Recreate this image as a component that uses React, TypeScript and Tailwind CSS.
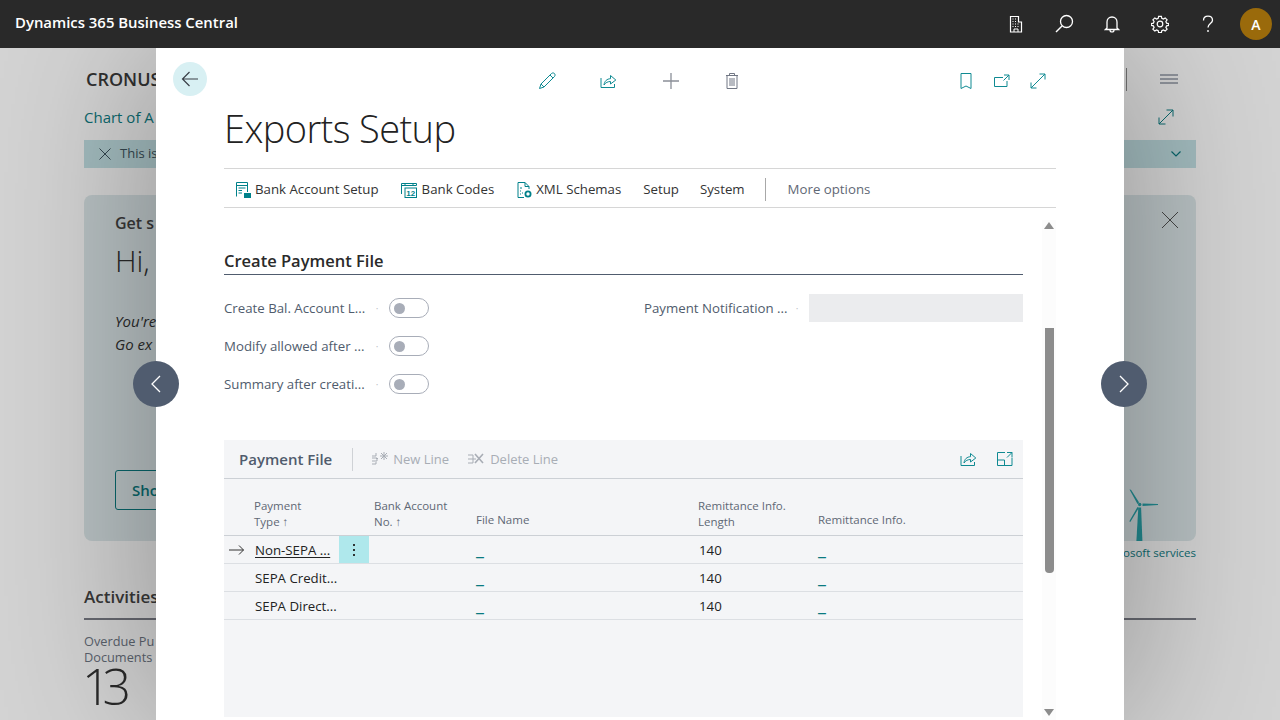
import React from "react";

const Sv = ({ w = 20, h = 20, c = "", children }: { w?: number; h?: number; c?: string; children: React.ReactNode }) => (
  <svg width={w} height={h} viewBox={`0 0 ${w} ${h}`} fill="none" stroke="currentColor" strokeWidth="1" className={c}>
    {children}
  </svg>
);

const Expand = ({ c = "" }: { c?: string }) => (
  <Sv w={18} h={18} c={c}>
    <path d="M2 16 16 2M9.5 2H16V8.5M2 9.5V16H8.5" strokeWidth="1" />
  </Sv>
);

const ShareIcon = ({ c = "" }: { c?: string }) => (
  <Sv w={18} h={18} c={c}>
    <path d="M2 6V15.5H15.500V12" />
    <path d="M5 13C5.5 9 8 6.8 11.5 6.7V3.500L16.8 8 11.5 12V9.500C9 9.500 6.5 10.500 5 13Z" />
  </Sv>
);

const HeaderIcons = () => (
  <div className="flex items-center text-white mr-[8px]">
    <div className="w-[48px] flex justify-center">
      <Sv w={14} h={18}>
        <path d="M1.5 17V1.5H9.5V7H12.5V17H1.5Z" strokeWidth="1.2" />
        <path d="M3.5 4h1M6 4h1M3.5 6.5h1M6 6.5h1M3.5 9h1M6 9h1M8.5 9h1M3.5 11.5h1M6 11.5h1M8.5 11.5h1" />
        <path d="M5 17V14H9V17" />
      </Sv>
    </div>
    <div className="w-[48px] flex justify-center">
      <Sv w={20} h={20}>
        <circle cx="12.5" cy="7.5" r="6" strokeWidth="1.3" />
        <path d="M8 12 2 18" strokeWidth="1.5" />
      </Sv>
    </div>
    <div className="w-[48px] flex justify-center">
      <Sv w={16} h={18}>
        <path d="M3 13V7C3 4.2 5 2 8 2S13 4.2 13 7V13L14.5 14.5H1.5L3 13Z" strokeWidth="1.3" />
        <path d="M6 15C6 16.3 7 17 8 17S10 16.3 10 15" strokeWidth="1.2" />
      </Sv>
    </div>
    <div className="w-[48px] flex justify-center">
      <Sv w={18} h={18}>
        <circle cx="9" cy="9" r="2.8" strokeWidth="1.2" />
        <path
          d="M7.6 1.3H10.4L10.8 3.4 12.4 4.1 14.2 2.9 16.1 4.8 14.9 6.6 15.6 8.2 17.7 8.6V10.4L15.6 10.8 14.9 12.4 16.1 14.2 14.2 16.1 12.4 14.9 10.8 15.6 10.4 17.7H7.6L7.2 15.6 5.6 14.9 3.8 16.1 1.9 14.2 3.1 12.4 2.4 10.8.3 10.4V8.6L2.4 8.2 3.1 6.6 1.9 4.8 3.8 2.9 5.6 4.1 7.2 3.4Z"
          strokeWidth="1.2"
        />
      </Sv>
    </div>
    <div className="w-[48px] flex justify-center">
      <Sv w={12} h={18}>
        <path d="M1.5 5.5C1.5 3 3.3 1.2 6 1.2S10.5 3 10.5 5.3C10.5 8.5 6 8.8 6 12.5" strokeWidth="1.3" />
        <circle cx="6" cy="16" r=".9" fill="currentColor" stroke="none" />
      </Sv>
    </div>
  </div>
);

const BackgroundPage = () => (
  <div className="h-[672px] bg-white px-[84px] flex flex-col overflow-hidden relative">
    <div className="h-[62px] flex items-center justify-between shrink-0">
      <span className="pl-[2px] text-[18px] font-semibold text-[#3a3a3a]">CRONUS</span>
      <div className="flex items-center">
        <div className="h-[23px] w-px bg-[#888]" />
        <div className="w-[69px] flex justify-end pr-[18px] text-[#5a6578]">
          <Sv w={18} h={10}>
            <path d="M0 1H18M0 5H18M0 9H18" />
          </Sv>
        </div>
      </div>
    </div>
    <div className="h-[14px] flex items-center justify-between shrink-0">
      <span className="text-[15px] text-[#0f8086]">Chart of A</span>
      <div className="pr-[21px] text-[#0f8086]">
        <Expand />
      </div>
    </div>
    <div className="h-[28px] mt-[16px] bg-[#c4e2e6] flex items-center justify-between px-[15px] shrink-0 text-[#3e5560]">
      <div className="flex items-center gap-[9px] text-[13px]">
        <Sv w={12} h={12}>
          <path d="M.5.5 11.5 11.5M11.5.5.5 11.5" />
        </Sv>
        <span>This is</span>
      </div>
      <div className="text-[#0a7a80]">
        <Sv w={10} h={6}>
          <path d="M.5.5 5 5 9.5.5" strokeWidth="1.2" />
        </Sv>
      </div>
    </div>
    <div className="h-[346px] mt-[27px] rounded-[8px] bg-[#dfeaec] pl-[31px] pr-[17px] pt-[16px] flex flex-col relative shrink-0">
      <div className="flex justify-between items-start">
        <span className="text-[16px] font-semibold text-[#444]">Get s</span>
        <span className="text-[#555]">
          <Sv w={18} h={18}>
            <path d="M1 1 17 17M17 1 1 17" />
          </Sv>
        </span>
      </div>
      <div className="text-[30px] font-light text-[#333] mt-[3px]">Hi,</div>
      <div className="mt-[27px] text-[15px] italic leading-[23px] text-[#333]">
        <div>You're</div>
        <div>Go ex</div>
      </div>
      <div className="mt-[114px] w-[160px] h-[40px] rounded-[3px] border border-[#0a7a80] flex items-center pl-[16px] text-[15px] font-semibold text-[#0a7a80]">
        Sho
      </div>
      <div className="absolute right-[37px] bottom-0 text-[#2aa5ac]">
        <svg width="32" height="52" viewBox="0 0 32 52" fill="currentColor">
          <path d="M11.300 18.500h2.800l1.300 33.500h-6z" />
          <path d="M2.500.5 4 .8 11.800 13 11.800 14.300 10.500 15ZM15.500 14.500 31 15V16L15.500 17ZM10.500 18 11.800 19 3.300 33 2.300 32.200Z" />
          <circle cx="12.700" cy="15.500" r="1.700" />
        </svg>
      </div>
    </div>
    <div className="h-[24px] flex items-center justify-end text-[11.5px] text-[#0f8086] shrink-0">Microsoft services</div>
    <div className="mt-[22px] h-[33px] border-b-[2px] border-[#7c7f88] text-[17px] leading-[20px] font-semibold text-[#444] shrink-0">Activities</div>
    <div className="mt-[13px] text-[12.750px] leading-[16px] text-[#6e7684]">
      <div>Overdue Pu</div>
      <div>Documents</div>
    </div>
    <div className="text-[50px] font-light leading-[42px] text-[#333] tracking-[-8px] ml-[-2px]">13</div>
  </div>
);

const Toggle = () => (
  <div className="w-[40px] h-[20px] rounded-full border border-[#a8adb8] bg-white flex items-center pl-[4px]">
    <div className="w-[11px] h-[11px] rounded-full bg-[#a8adb8]" />
  </div>
);

const Field = ({ label }: { label: string }) => (
  <div className="h-[38px] flex items-center">
    <span className="w-[146px] pt-[1px] text-[13.250px] text-[#505c6d] whitespace-nowrap">{label}</span>
    <span className="w-[14px] mr-[5px] text-center text-[#c0c3c8] text-[10px]">·</span>
    <Toggle />
  </div>
);

const ActionBtn = ({ icon, label, c = "" }: { icon?: React.ReactNode; label: string; c?: string }) => (
  <div className={`flex items-center gap-[4px] text-[13.250px] text-[#333] ${c}`}>
    {icon}
    <span>{label}</span>
  </div>
);

const cols = "grid grid-cols-[30px_115px_102px_222px_120px_1fr]";

const Link = () => <div className="pl-[5px] mt-[-4px] text-[#0a7a80] text-[18px] leading-[12px]">_</div>;

const Row = ({ name, active }: { name: string; active?: boolean }) => (
  <div className={`${cols} h-[28px] border-b border-[#dcdfe3] text-[13.250px] text-[#222] items-center`}>
    <div className="flex justify-start pl-[5px] text-[#333]">
      {active && (
        <Sv w={15} h={10}>
          <path d="M0 5H14.500M10 .5 14.500 5 10 9.500" />
        </Sv>
      )}
    </div>
    <div className="flex items-center h-full">
      <span className={`pl-[1px] w-[85px] pt-[2px] whitespace-nowrap ${active ? "underline underline-offset-[2px]" : ""}`}>{name}</span>
      {active && (
        <div className="w-[30px] h-full bg-[#afe8ec] flex items-center justify-center text-[#222]">
          <Sv w={4} h={14}>
            <path d="M2 1v2M2 6v2M2 11v2" strokeWidth="1.8" />
          </Sv>
        </div>
      )}
    </div>
    <div />
    <Link />
    <div className="pl-[6px] pt-[2px]">140</div>
    <Link />
  </div>
);

const Head = ({ lines, c = "" }: { lines: string[]; c?: string }) => (
  <div className={`pl-[5px] self-end text-[11.5px] leading-[16px] text-[#5f6875] whitespace-nowrap ${c}`}>
    {lines.map((l) => (
      <div key={l}>{l}</div>
    ))}
  </div>
);

const Modal = () => (
  <div className="absolute left-[156px] top-[48px] bottom-0 w-[968px] bg-white shadow-[0_0_160px_rgba(0,0,0,0.34)] flex flex-col overflow-hidden z-20">
    <div className="h-[62px] shrink-0 flex items-start pt-[14px] pl-[17px]">
      <div className="w-[34px] h-[34px] rounded-full bg-[#d8f0f3] flex items-center justify-center text-[#3a3f47]">
        <Sv w={18} h={16}>
          <path d="M17 8H1.5M8.5 1 1.5 8 8.5 15" strokeWidth="1.2" />
        </Sv>
      </div>
      <div className="ml-[331px] flex items-center mt-[10px] text-[#0f8a92]">
        <div className="w-[18px]">
          <Sv w={18} h={18}>
            <path d="M1.5 16.5 3 12 13.5 1.5C14.5.7 15.8.8 16.500 1.600S17.300 3.500 16.500 4.500L6 15Z M3 12 6 15M12 3 15 6" />
          </Sv>
        </div>
        <div className="w-[18px] ml-[43px]">
          <ShareIcon />
        </div>
        <div className="w-[18px] ml-[45px] text-[#8a8f98]">
          <Sv w={18} h={18}>
            <path d="M9 1V17M1 9H17" strokeWidth="1.3" />
          </Sv>
        </div>
        <div className="w-[14px] ml-[45px] text-[#717784]">
          <Sv w={14} h={18}>
            <path d="M1 3.500H13M4.500 3.500V1.500H9.500V3.500M2 3.500V16.500H12V3.500M5 6V14M7 6V14M9 6V14" />
          </Sv>
        </div>
        <div className="w-[12px] ml-[221px]">
          <Sv w={12} h={16}>
            <path d="M1 .5H11V15.500L6 13 1 15.500Z" />
          </Sv>
        </div>
        <div className="w-[16px] ml-[22px]">
          <Sv w={16} h={14}>
            <path d="M9 3.500H.5V12.500H13V7M10 1H15V6M15 1 9.500 6.500" />
          </Sv>
        </div>
        <div className="w-[16px] ml-[20px]">
          <Sv w={16} h={16}>
            <path d="M1 15 15 1M9.500 1H15V6.500M1 9.500V15H6.500" />
          </Sv>
        </div>
      </div>
    </div>
    <div className="h-[58px] shrink-0 pl-[68px] flex items-start text-[38px] leading-[36px] tracking-[-0.6px] font-light text-[#222]">Exports Setup</div>
    <div className="mx-[68px] h-[40px] shrink-0 border-y border-[#d6d6d6] flex items-center pl-[12px] pt-[3px]">
      <div className="flex items-center gap-[22px]">
        <ActionBtn
          label="Bank Account Setup"
          icon={
            <span className="text-[#00818a]">
              <Sv w={15} h={16}>
                <path d="M.5 14.500V.5H11.500V10M1 3.500H11M2.500 6H9.500M2.500 8.500H6M2.500 11H6" />
                <path d="M8 11H15V16H8Z" fill="currentColor" stroke="none" />
              </Sv>
            </span>
          }
        />
        <ActionBtn
          c="gap-[5px]"
          label="Bank Codes"
          icon={
            <span className="text-[#00818a]">
              <svg width="16" height="16" viewBox="0 0 16 16" fill="none" stroke="currentColor">
                <path d="M.5 12V1.500H15.500V3.500H.5M4 1V4M12 1V4" />
                <rect x="4" y="6" width="11.500" height="9.500" />
                <text x="5.200" y="14" fontSize="8" fontWeight="700" fill="currentColor" stroke="none" fontFamily="Liberation Sans">12</text>
              </svg>
            </span>
          }
        />
        <ActionBtn
          c="ml-[1px]"
          label="XML Schemas"
          icon={
            <span className="text-[#00818a]">
              <Sv w={15} h={16}>
                <path d="M7 15.500H1V.5H8L12 4.500V7M8 .5V4.500H12" />
                <path d="M3 6h2M3 9h1M5 11h1M3 12h1" />
                <circle cx="11" cy="12" r="2.600" strokeWidth="1.800" />
              </Sv>
            </span>
          }
        />
        <ActionBtn label="Setup" />
        <ActionBtn label="System" c="ml-[-1px]" />
      </div>
      <div className="ml-[20px] h-[23px] w-px bg-[#a8a8a8]" />
      <span className="ml-[22px] text-[13.250px] text-[#5f6875]">More options</span>
    </div>
    <div className="flex-1 flex min-h-0">
      <div className="ml-[68px] w-[799px] flex flex-col">
        <div className="mt-[39px] h-[28px] border-b border-[#505c6e] text-[16.500px] leading-[28px] font-semibold text-[#2a2a2a]">Create Payment File</div>
        <div className="mt-[14px] flex h-[114px]">
          <div className="w-[420px] flex flex-col">
            <Field label="Create Bal. Account L..." />
            <Field label="Modify allowed after ..." />
            <Field label="Summary after creati..." />
          </div>
          <div className="flex-1 h-[38px] flex items-center">
            <span className="w-[146px] pt-[1px] text-[13.250px] text-[#505c6d] whitespace-nowrap">Payment Notification ...</span>
            <span className="w-[14px] mr-[5px] text-center text-[#c0c3c8] text-[10px]">·</span>
            <div className="flex-1 h-[28px] mt-[-1px] bg-[#ebecee]" />
          </div>
        </div>
        <div className="mt-[37px] h-[277px] bg-[#f4f5f7] flex flex-col">
          <div className="h-[39px] border-b border-[#ccd0d5] flex items-center pl-[15px] pr-[10px]">
            <span className="text-[15px] font-semibold text-[#505c6d] pt-[1px]">Payment File</span>
            <div className="ml-[20px] h-[23px] w-px bg-[#cfd2d6]" />
            <div className="ml-[19px] flex items-center gap-[4px] text-[13px] text-[#a8adb5]">
              <Sv w={17} h={14}>
                <path d="M0 4H4V1M0 6H5V9H0M0 12H4V10M6 6.500H4" />
                <path d="M9 1 15 7M15 1 9 7M12 0V8M8 4H16" />
              </Sv>
              <span className="pt-[2px]">New Line</span>
            </div>
            <div className="ml-[19px] flex items-center gap-[5px] text-[13px] text-[#a8adb5]">
              <Sv w={17} h={14}>
                <path d="M0 3H5V11H0M0 7H8" />
                <path d="M7 2 15 11M15 2 7 11" strokeWidth="1.600" />
              </Sv>
              <span className="pt-[2px]">Delete Line</span>
            </div>
            <div className="ml-auto flex items-center gap-[20px] text-[#0f8a92]">
              <ShareIcon />
              <Sv w={16} h={14}>
                <path d="M8 .5H.5V13.500H15V6M.5 8H7.500V13.500M10 .5H15V5.500M15 .5 10 5.500" />
              </Sv>
            </div>
          </div>
          <div className={`${cols} h-[57px] border-b border-[#ccd0d5] pb-[5px]`}>
            <div />
            <div className="self-end text-[11.500px] leading-[16px] text-[#5f6875]">
              <div>Payment</div>
              <div>Type ↑</div>
            </div>
            <Head lines={["Bank Account", "No. ↑"]} />
            <Head lines={["File Name"]} c="mb-[2px]" />
            <Head lines={["Remittance Info.", "Length"]} />
            <Head lines={["Remittance Info."]} c="mb-[2px]" />
          </div>
          <Row name="Non-SEPA ..." active />
          <Row name="SEPA Credit..." />
          <Row name="SEPA Direct..." />
        </div>
      </div>
      <div className="ml-[19px] w-[14px] mt-[12px] bg-[#fcfcfc] flex flex-col items-center">
        <div className="mt-[2px] w-0 h-0 border-x-[5px] border-x-transparent border-b-[7px] border-b-[#8c8c8c]" />
        <div className="mt-[99px] w-[9px] h-[245px] rounded-b-[4px] bg-[#8c8c8c]" />
        <div className="mt-auto mb-[4px] w-0 h-0 border-x-[5px] border-x-transparent border-t-[7px] border-t-[#8c8c8c]" />
      </div>
    </div>
  </div>
);

const NavBtn = ({ c, d }: { c: string; d: string }) => (
  <div className={`absolute top-[361px] w-[46px] h-[46px] rounded-full bg-[#505c6f] flex items-center justify-center text-white z-30 ${c}`}>
    <Sv w={10} h={18}>
      <path d={d} strokeWidth="1.300" />
    </Sv>
  </div>
);

export default function App() {
  return (
    <div className="relative w-[1280px] h-[720px] overflow-hidden font-['Open_Sans',sans-serif] bg-white">
      <header className="relative z-40 h-[48px] bg-[#292929] flex items-center justify-between pl-[15px] pr-[8px]">
        <span className="text-[14.900px] font-semibold text-white pb-[3px]">Dynamics 365 Business Central</span>
        <div className="flex items-center">
          <HeaderIcons />
          <div className="w-[32px] h-[32px] rounded-full bg-[#9a6a0b] flex items-center justify-center text-white text-[14px] font-semibold">A</div>
        </div>
      </header>
      <BackgroundPage />
      <div className="absolute inset-0 bg-black/[.17] z-10" />
      <Modal />
      <NavBtn c="left-[133px]" d="M9 1 1 9 9 17" />
      <NavBtn c="left-[1101px]" d="M1 1 9 9 1 17" />
    </div>
  );
}
